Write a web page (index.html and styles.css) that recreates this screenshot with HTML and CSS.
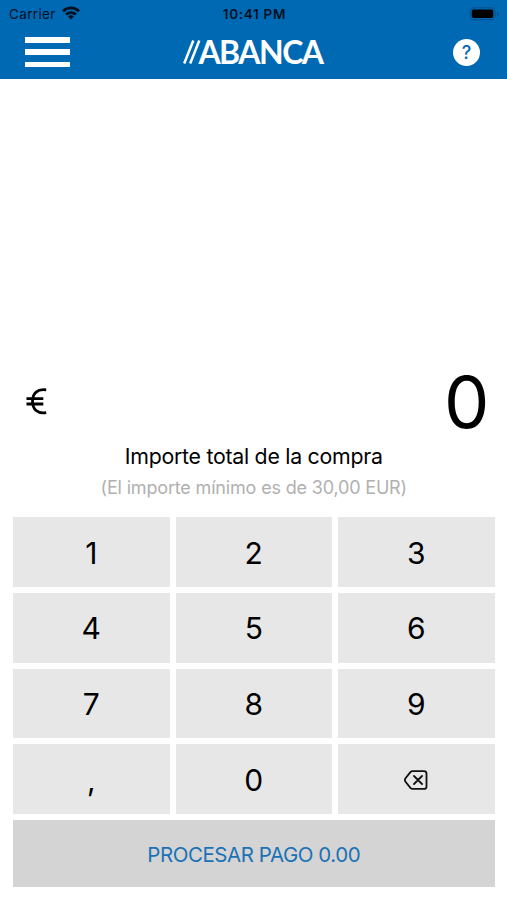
FILE: index.html
```html
<!DOCTYPE html>
<html lang="es">
<head>
<meta charset="utf-8">
<title>ABANCA</title>
<link rel="stylesheet" href="styles.css">
</head>
<body>
<header class="header">
  <div class="status">
    <div class="carrier">
      <span>Carrier</span>
      <svg class="wifi" width="18" height="14" viewBox="0 0 18 14"><g fill="none" stroke="#02101f" stroke-width="2.7"><path d="M1 5.2a11.4 11.4 0 0 1 16 0"/><path d="M4 8.600a7.200 7.200 0 0 1 10 0"/></g><path d="M9 13.4 6.2 10.6a4 4 0 0 1 5.6 0z" fill="#02101f"/></svg>
    </div>
    <span class="time">10:41 PM</span>
    <svg class="battery" width="31" height="14" viewBox="0 0 31 14"><rect x="1" y=".8" width="25" height="12" rx="3.6" fill="none" stroke="#034f8d"/><rect x="2.7" y="2.6" width="21.6" height="8.4" rx="2" fill="#000"/><path d="M28 5v4q1.600-.4 1.600-2T28 5z" fill="#034f8d"/></svg>
  </div>
  <nav class="nav">
    <div class="menu"><i></i><i></i><i></i></div>
    <div class="logo">
      <svg width="18" height="24" viewBox="0 0 18 24"><path d="M10.300.5 1.200 23.500M16.300.5 7.200 23.500" fill="none" stroke="#fff" stroke-width="2.500"/></svg>
      <span>ABANCA</span>
    </div>
    <div class="help">?</div>
  </nav>
</header>
<main class="main">
  <div class="amount"><svg class="euro" width="21" height="27" viewBox="0 0 21 27"><path d="M20.200 1.900C11.500.6 6.500 5.200 6.500 13.300s5 12.700 13.700 11.400M.5 10.700h16.800M.5 16h16.800" fill="none" stroke="#000" stroke-width="2.800"/></svg><span class="value">0</span></div>
  <p class="label">Importe total de la compra</p>
  <p class="hint">(El importe mínimo es de 30,00 EUR)</p>
  <div class="pad">
    <div class="key">1</div><div class="key">2</div><div class="key">3</div>
    <div class="key">4</div><div class="key">5</div><div class="key">6</div>
    <div class="key">7</div><div class="key">8</div><div class="key">9</div>
    <div class="key">,</div><div class="key">0</div>
    <div class="key"><svg width="24" height="20" viewBox="0 0 24 20" fill="none" stroke="#111" stroke-width="1.800" stroke-linecap="round" stroke-linejoin="round"><path d="M8.600 1.100H20a2.500 2.500 0 0 1 2.500 2.500v12.800a2.500 2.500 0 0 1-2.500 2.500H8.600a3 3 0 0 1-2.200-1L1.700 12q-1.600-2 0-4l4.700-5.900a3 3 0 0 1 2.200-1zM10 6l8 8M18 6l-8 8"/></svg></div>
  </div>
  <div class="pay">PROCESAR PAGO 0.00</div>
</main>
</body>
</html>
```
FILE: styles.css
```css
* { box-sizing: border-box; }
body {
  margin: 0;
  height: 900px;
  overflow: hidden;
  background: #fff;
  color: #000;
  font-family: Inter, "Liberation Sans", sans-serif;
  display: flex;
  flex-direction: column;
}
.header { height: 79.400px; background: #0069b4; flex: none; }
.status {
  height: 27px;
  padding: 0 7px 0 9px;
  display: grid;
  grid-template-columns: 1fr auto 1fr;
  align-items: center;
  color: #02101f;
  font-size: 13.500px;
}
.carrier { display: flex; align-items: center; gap: 6px; letter-spacing: .35px; }
.wifi { margin-top: -1px; }
.time { font-weight: 600; letter-spacing: .7px; }
.battery { justify-self: end; }
.nav {
  height: 50px;
  padding: 0 27px 0 25px;
  display: grid;
  grid-template-columns: 1fr auto 1fr;
  align-items: center;
}
.menu { width: 45px; height: 30px; display: flex; flex-direction: column; justify-content: space-between; }
.menu i { height: 5.500px; background: #fff; }
.logo {
  display: flex;
  align-items: center;
  color: #fff;
  font: 700 32px/24px Lato, sans-serif;
}
.logo span { margin: 0 -1px 0 -3px; letter-spacing: -1.500px; }
.help {
  justify-self: end;
  width: 27px;
  height: 27px;
  border-radius: 50%;
  background: #fff;
  color: #0069b4;
  font-size: 18px;
  line-height: 27px;
  font-weight: 500;
  text-align: center;
}
.main { flex: 1; padding: 284px 12.500px 0 13px; }
.amount {
  height: 76.600px;
  padding: 0 5px 0 13px;
  display: flex;
  align-items: center;
  justify-content: space-between;
}
.value { font-size: 72px; line-height: 76px; }
p { margin: 0; text-align: center; }
.label { height: 32px; line-height: 32px; font-size: 21.300px; letter-spacing: -.26px; }
.hint { height: 32px; line-height: 32px; font-size: 18px; letter-spacing: -.17px; color: #b0b0b0; }
.pad {
  margin-top: 13.400px;
  display: grid;
  grid-template-columns: repeat(3, 1fr);
  grid-auto-rows: 69.700px;
  gap: 6px;
}
.key {
  display: flex;
  align-items: center;
  justify-content: center;
  padding-top: 1px;
  background: #e7e7e7;
  font-size: 30px;
}
.pay {
  margin-top: 6px;
  height: 67px;
  line-height: 69px;
  background: #d4d4d4;
  color: #1a72b5;
  font-size: 20.500px;
  letter-spacing: -.45px;
  text-align: center;
}
```
